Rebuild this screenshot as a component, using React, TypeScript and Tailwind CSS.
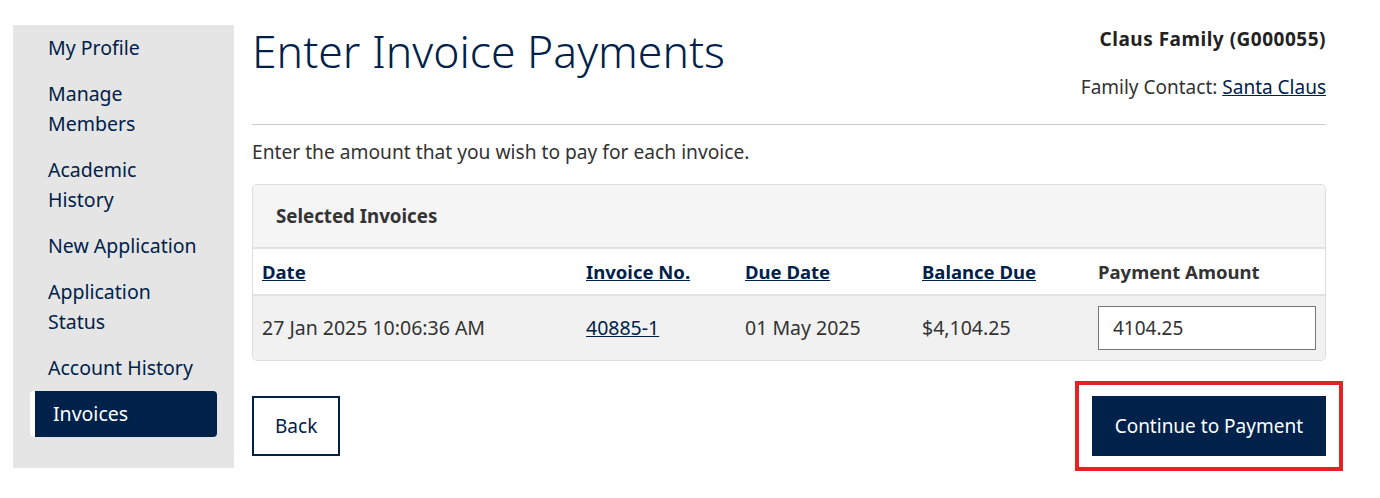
import React from "react";

const navy = "text-[#00214a]";

function NavItem({ label, active }: { label: string; active?: boolean }) {
  if (active) {
    return (
      <div className="rounded-[4px] border-l-[5px] border-white bg-[#00214a] py-2 pl-[18px] pr-[12px] text-[19.5px] leading-[30px] text-white">
        {label}
      </div>
    );
  }
  return (
    <div className={`py-2 pl-[18px] pr-[17px] text-[19.5px] leading-[30px] ${navy}`}>{label}</div>
  );
}

export default function App() {
  return (
    <div
      className="flex items-start bg-white pl-[13px] pt-[25px] text-[#333]"
      style={{ fontFamily: '"Noto Sans", "Open Sans", sans-serif' }}
    >
      <aside className="flex w-[221px] shrink-0 flex-col bg-[#e5e5e5] px-[17px] pb-[31px]">
        <NavItem label="My Profile" />
        <NavItem label="Manage Members" />
        <NavItem label="Academic History" />
        <NavItem label="New Application" />
        <NavItem label="Application Status" />
        <NavItem label="Account History" />
        <NavItem label="Invoices" active />
      </aside>

      <main className="ml-[18px] flex w-[1074px] flex-col">
        <div className="flex items-start justify-between">
          <h1 className={`-mt-[2px] text-[44.5px] font-light leading-[56px] ${navy}`}>
            Enter Invoice Payments
          </h1>
          <div className="flex flex-col items-end">
            <div className="mt-[2px] text-[19px] font-bold leading-[24px] tracking-[0.5px] text-[#222]">
              Claus Family (G000055)
            </div>
            <div className="mt-[24px] text-[19px] leading-[24px] text-[#333]">
              Family Contact:{" "}
              <a href="#" className={`underline ${navy}`}>
                Santa Claus
              </a>
            </div>
          </div>
        </div>

        <div className="mt-[25px] h-px bg-[#cccccc]" />

        <p className="mt-[14px] text-[19.2px] leading-[26px] text-[#333]">
          Enter the amount that you wish to pay for each invoice.
        </p>

        <div className="mt-[19px] overflow-hidden rounded-[5px] border border-[#dddddd]">
          <div className="flex h-[64px] items-center border-b-2 border-[#e2e2e2] bg-[#f5f5f5] px-[23px]">
            <span className="text-[18.7px] font-bold text-[#333]">Selected Invoices</span>
          </div>
          <div className="grid h-[47px] grid-cols-[324px_159px_177px_176px_1fr] items-center border-b-2 border-[#e2e2e2] bg-white pl-[9px] text-[18.5px] font-bold">
            <a href="#" className={`underline ${navy}`}>Date</a>
            <a href="#" className={`underline ${navy}`}>Invoice No.</a>
            <a href="#" className={`underline ${navy}`}>Due Date</a>
            <a href="#" className={`underline ${navy}`}>Balance Due</a>
            <span className="text-[#333]">Payment Amount</span>
          </div>
          <div className="grid h-[64px] grid-cols-[324px_159px_177px_176px_1fr] items-center bg-[#f1f1f1] pl-[9px] pr-[9px] text-[19.5px] text-[#333]">
            <span>27 Jan 2025 10:06:36 AM</span>
            <a href="#" className={`underline ${navy}`}>40885-1</a>
            <span>01 May 2025</span>
            <span>$4,104.25</span>
            <input
              defaultValue="4104.25"
              className="h-[44px] w-full border border-[#777] bg-white px-[14px] text-[19px] text-[#333] outline-none"
            />
          </div>
        </div>

        <div className="mt-[20px] flex items-center justify-between">
          <button className={`h-[60px] border-2 border-[#00214a] bg-white px-[21px] text-[19px] ${navy}`}>
            Back
          </button>
          <div className="-mr-[17px] border-4 border-[#e52222] px-[13px] py-[11px]">
            <button className="block h-[60px] bg-[#00214a] px-[23px] text-[19px] text-white">
              Continue to Payment
            </button>
          </div>
        </div>
      </main>
    </div>
  );
}
